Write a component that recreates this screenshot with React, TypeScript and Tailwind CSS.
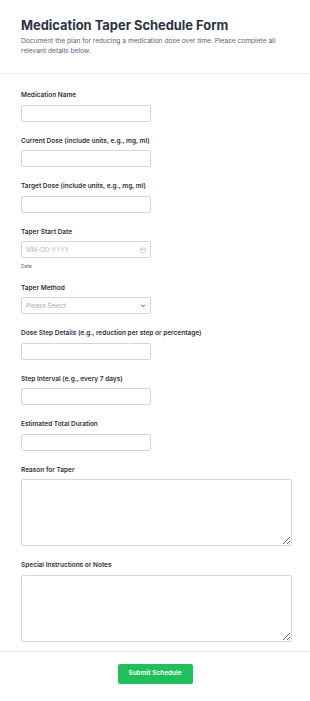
import React from "react";

const labelCls =
  "block text-[6.5px] leading-[10px] font-semibold text-[#2c3345] mb-[4.5px]";
const inputCls =
  "block w-[130px] h-[17px] border border-[#d3d6df] rounded-[2px] bg-white";

function Field({ label, children }: { label: string; children: React.ReactNode }) {
  return (
    <div className="mb-[14px]">
      <label className={labelCls}>{label}</label>
      {children}
    </div>
  );
}

export default function App() {
  return (
    <div
      className="w-full bg-white"
      style={{ fontFamily: "Inter, 'Noto Sans', sans-serif" }}
    >
      <div className="pl-[21px] pr-[10px] pt-[17px] pb-[16px] border-b border-[#e6e8ee]">
        <h1 className="text-[12.9px] leading-[17px] font-bold text-[#2c3345]">
          Medication Taper Schedule Form
        </h1>
        <p className="mt-[1.5px] text-[6.65px] leading-[10.5px] text-[#57647e] whitespace-nowrap">
          Document the plan for reducing a medication dose over time. Please complete all
          <br />
          relevant details below.
        </p>
      </div>

      <div className="pl-[21px] pr-[18px] pt-[16.5px] pb-[9px] border-b border-[#e6e8ee]">
        <Field label="Medication Name">
          <div className={inputCls} />
        </Field>
        <Field label="Current Dose (include units, e.g., mg, ml)">
          <div className={inputCls} />
        </Field>
        <Field label="Target Dose (include units, e.g., mg, ml)">
          <div className={inputCls} />
        </Field>
        <div className="mb-[13px]">
          <label className={labelCls}>Taper Start Date</label>
          <div className={`${inputCls} flex items-center justify-between px-[4px]`}>
            <span className="text-[6.3px] leading-[10px] text-[#b4bac6]">MM-DD-YYYY</span>
            <svg width="6" height="6" viewBox="0 0 12 12" fill="none" stroke="#b4bac6" strokeWidth="1.2">
              <rect x="1" y="2" width="10" height="9" rx="1.5" />
              <line x1="1" y1="5" x2="11" y2="5" />
              <line x1="7" y1="7.5" x2="9" y2="7.5" />
            </svg>
          </div>
          <div className="mt-[3.5px] text-[5px] leading-[8px] text-[#57647e]">Date</div>
        </div>
        <Field label="Taper Method">
          <div className={`${inputCls} flex items-center justify-between px-[4px]`}>
            <span className="text-[6.3px] leading-[10px] text-[#a3aaba]">Please Select</span>
            <svg width="6" height="6" viewBox="0 0 12 12" fill="none" stroke="#2c3345" strokeWidth="1.6" strokeLinecap="round" strokeLinejoin="round">
              <polyline points="3,4.5 6,7.5 9,4.5" />
            </svg>
          </div>
        </Field>
        <Field label="Dose Step Details (e.g., reduction per step or percentage)">
          <div className={inputCls} />
        </Field>
        <Field label="Step Interval (e.g., every 7 days)">
          <div className={inputCls} />
        </Field>
        <Field label="Estimated Total Duration">
          <div className={inputCls} />
        </Field>
        <div className="mb-[14px]">
          <label className={labelCls}>Reason for Taper</label>
          <textarea className="block w-full h-[67px] border border-[#d3d6df] rounded-[2px] bg-white" />
        </div>
        <div>
          <label className={labelCls}>Special Instructions or Notes</label>
          <textarea className="block w-full h-[67px] border border-[#d3d6df] rounded-[2px] bg-white" />
        </div>
      </div>

      <div className="flex justify-center pt-[12px] pb-[16px]">
        <button className="w-[75px] h-[20px] rounded-[2px] bg-[#1fc05c] text-white text-[6.5px] font-semibold">
          Submit Schedule
        </button>
      </div>
    </div>
  );
}
